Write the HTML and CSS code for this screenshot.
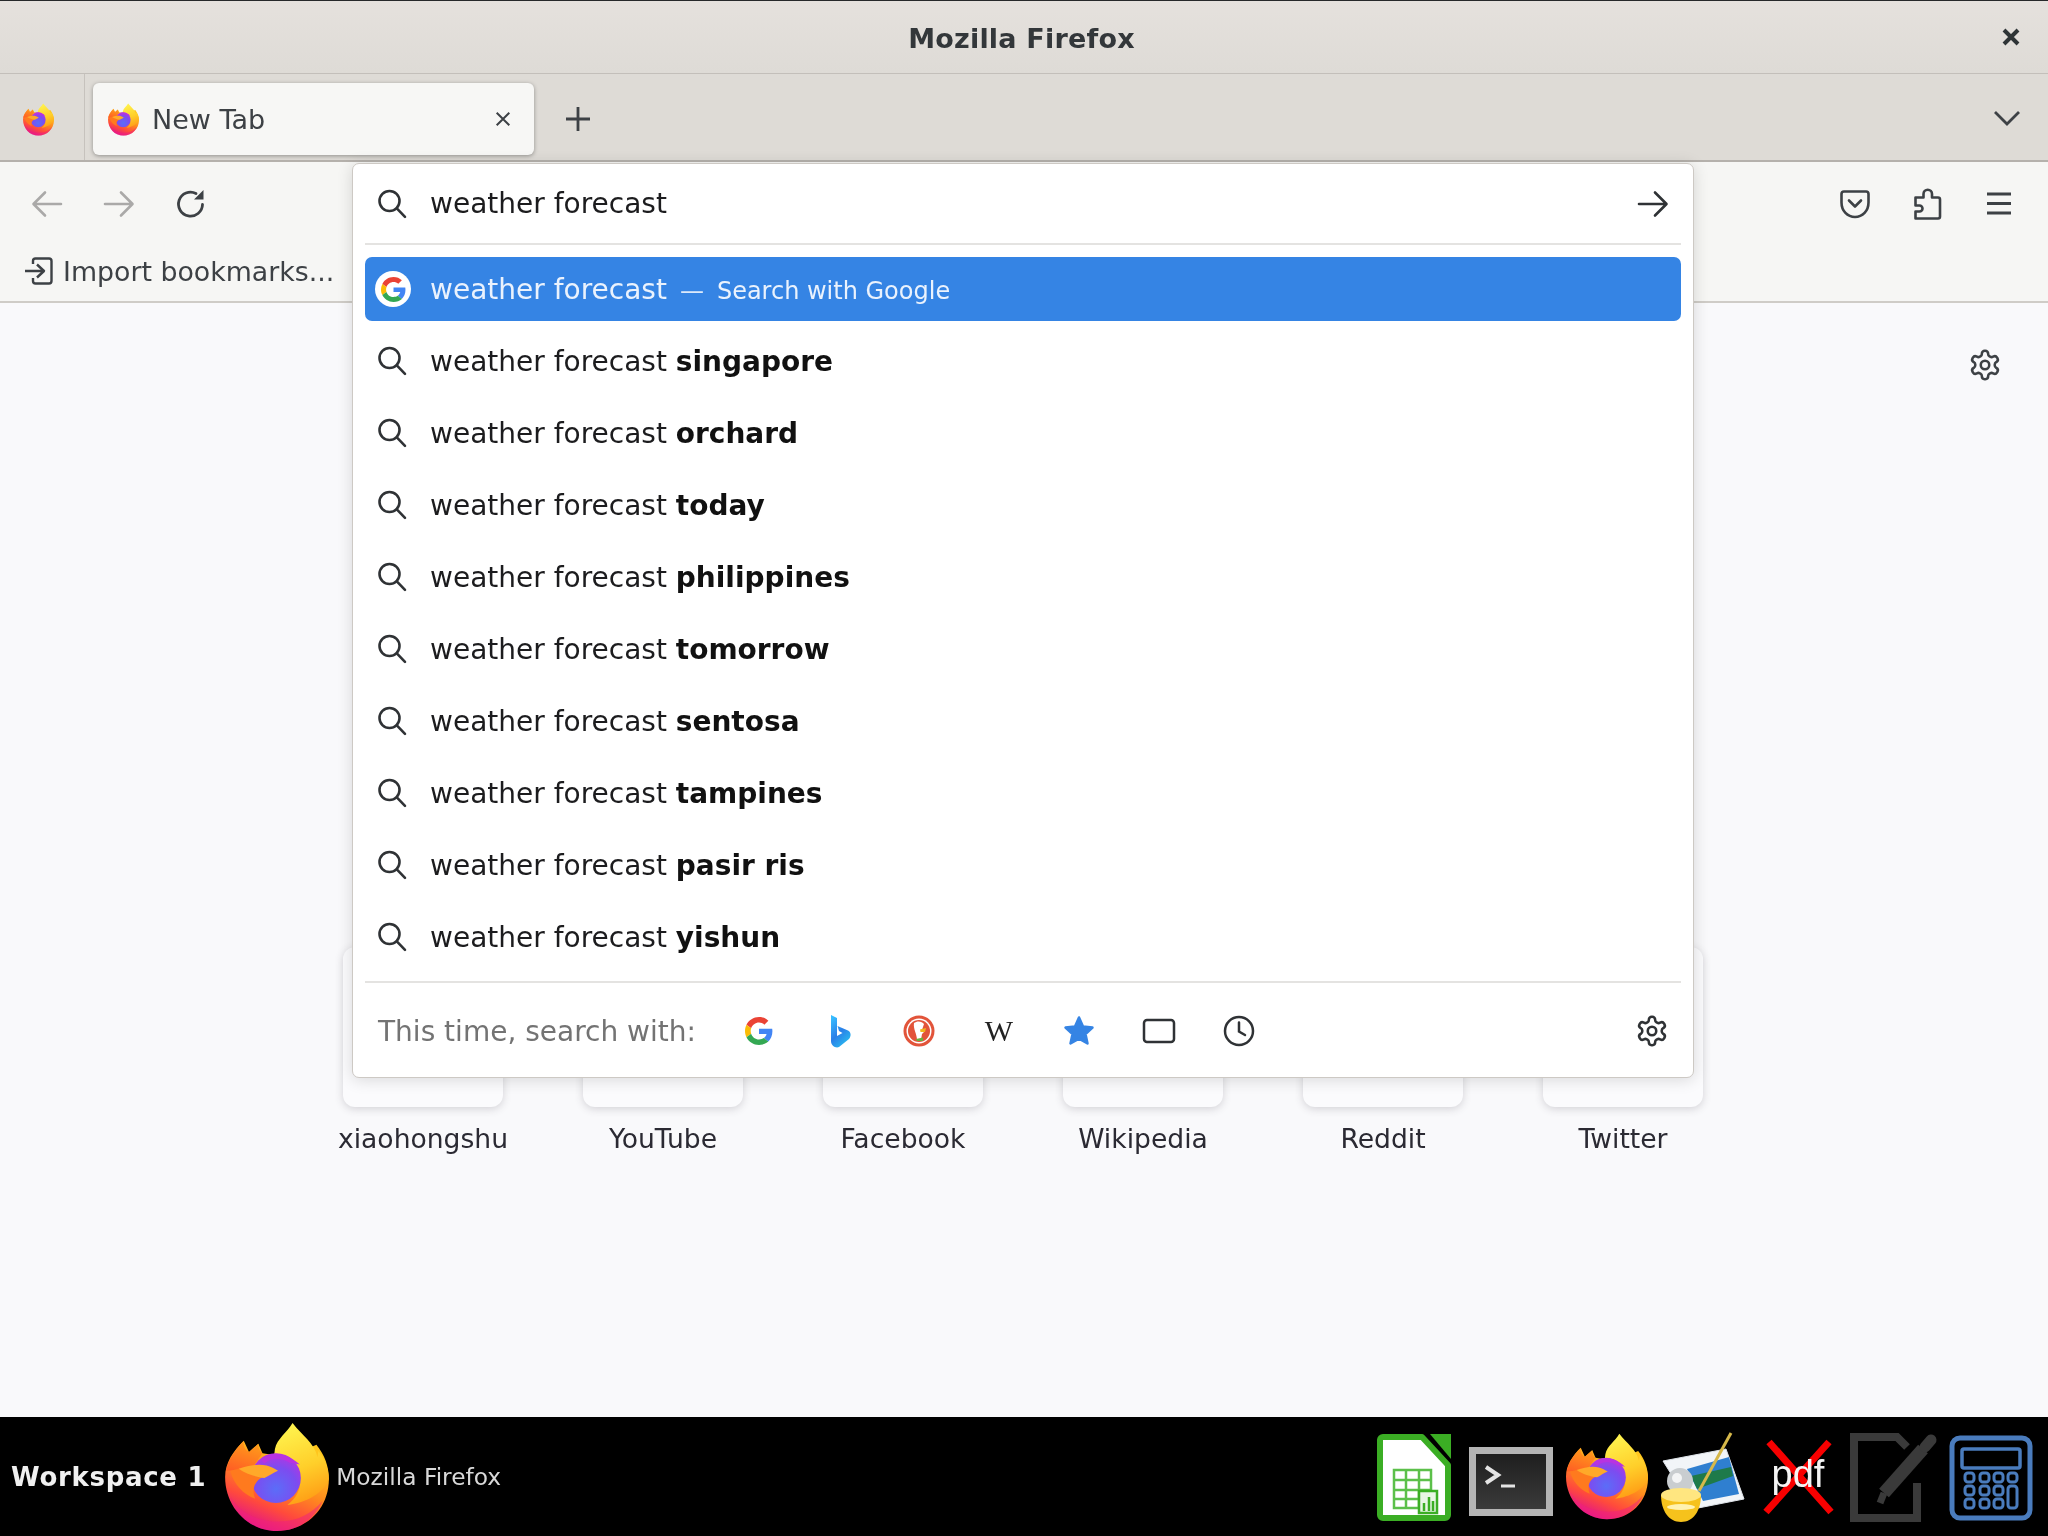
FILE: index.html
```html
<!DOCTYPE html>
<html lang="en">
<head>
<meta charset="utf-8">
<title>Mozilla Firefox</title>
<link rel="stylesheet" href="styles.css">
</head>
<body>
<svg class="defs" width="0" height="0" aria-hidden="true">
  <defs>
    <linearGradient id="ffBody" x1="0.8" y1="0.2" x2="0.4" y2="1">
      <stop offset="0" stop-color="#ffc61e"/><stop offset="0.4" stop-color="#ff8a1e"/><stop offset="0.72" stop-color="#ff4a3c"/><stop offset="1" stop-color="#e31587"/>
    </linearGradient>
    <linearGradient id="ffFlame" x1="0.35" y1="0" x2="0.6" y2="1">
      <stop offset="0" stop-color="#fff44f"/><stop offset="0.55" stop-color="#ffcf2a"/><stop offset="1" stop-color="#ff9a14"/>
    </linearGradient>
    <linearGradient id="ffEar" x1="0.6" y1="0" x2="0.2" y2="1">
      <stop offset="0" stop-color="#ff9c1a"/><stop offset="1" stop-color="#ff5f24"/>
    </linearGradient>
    <radialGradient id="ffGlobe" cx="0.5" cy="0.72" r="0.72">
      <stop offset="0" stop-color="#5b6df8"/><stop offset="0.6" stop-color="#7c4cf0"/><stop offset="1" stop-color="#b833e1"/>
    </radialGradient>
    <symbol id="firefox" viewBox="0 0 100 106">
      <path fill="url(#ffBody)" d="M0 53C0 39 8 28 18 18L23 29L32 21L36 30L60 34L88 22C96 32 100 43 100 55C100 84 78 105 50 105C22 105 0 82 0 53Z"/>
      <path fill="#ef1f80" opacity=".5" d="M5 72C14 88 32 96 52 96C70 96 84 88 94 76C86 94 70 105 50 105C29 105 12 92 5 72Z"/>
      <path fill="url(#ffFlame)" d="M65 1C60 10 50 16 48 26L47 34C60 36 70 42 72 56C73 66 68 74 60 80C78 78 96 68 100 55C100 45 96 36 90 28L89 34C86 20 74 13 65 1Z"/>
      <path fill="url(#ffEar)" d="M18 18C17 23 19 27 23 29L32 21C32 25 33 28 36 30L25 46L1 47C3 36 10 26 18 18Z"/>
      <circle cx="49" cy="54" r="24" fill="url(#ffGlobe)"/>
      <path fill="#b833e1" d="M34 36C42 28 58 28 72 41L62 39C54 34 44 34 38 40Z"/>
      <path fill="#ff7a1e" d="M38 52C29 56 25 64 29 74C18 70 8 60 5 47L13 45Z"/>
      <path fill="#ffa929" d="M13 45C22 42 32 40 40 42C44 43 48 45 51 47C46 49 42 52 38 54C30 53 20 50 13 45Z"/>
    </symbol>
    <symbol id="google" viewBox="0 0 48 48">
      <path fill="#EA4335" d="M24 9.5c3.54 0 6.71 1.22 9.21 3.6l6.85-6.85C35.9 2.38 30.47 0 24 0 14.62 0 6.51 5.38 2.56 13.22l7.98 6.19C12.43 13.72 17.74 9.5 24 9.5z"/>
      <path fill="#4285F4" d="M46.98 24.55c0-1.57-.15-3.09-.38-4.55H24v9.02h12.94c-.58 2.96-2.26 5.48-4.78 7.18l7.73 6c4.51-4.18 7.09-10.36 7.09-17.65z"/>
      <path fill="#FBBC05" d="M10.53 28.59c-.48-1.45-.76-2.99-.76-4.59s.27-3.14.76-4.59l-7.98-6.19C.92 16.46 0 20.12 0 24c0 3.88.92 7.54 2.56 10.78l7.97-6.19z"/>
      <path fill="#34A853" d="M24 48c6.48 0 11.93-2.13 16.02-5.81l-7.73-6c-2.15 1.45-4.92 2.3-8.29 2.3-6.26 0-11.57-4.22-13.47-9.91l-7.98 6.19C6.51 42.62 14.62 48 24 48z"/>
    </symbol>
    <symbol id="search" viewBox="0 0 32 32">
      <circle cx="13.5" cy="13" r="10" fill="none" stroke="currentColor" stroke-width="2.6"/>
      <path d="M20.8 20.3L29 28.8" fill="none" stroke="currentColor" stroke-width="2.6" stroke-linecap="round"/>
    </symbol>
    <symbol id="gear" viewBox="0 0 24 24">
      <path fill="none" stroke="currentColor" stroke-width="1.8" stroke-linejoin="round" d="M12.22 2h-.44a2 2 0 0 0-2 2v.18a2 2 0 0 1-1 1.73l-.43.25a2 2 0 0 1-2 0l-.15-.08a2 2 0 0 0-2.73.73l-.22.38a2 2 0 0 0 .73 2.73l.15.1a2 2 0 0 1 1 1.72v.51a2 2 0 0 1-1 1.74l-.15.09a2 2 0 0 0-.73 2.73l.22.38a2 2 0 0 0 2.73.73l.15-.08a2 2 0 0 1 2 0l.43.25a2 2 0 0 1 1 1.73V20a2 2 0 0 0 2 2h.44a2 2 0 0 0 2-2v-.18a2 2 0 0 1 1-1.73l.43-.25a2 2 0 0 1 2 0l.15.08a2 2 0 0 0 2.73-.73l.22-.39a2 2 0 0 0-.73-2.73l-.15-.08a2 2 0 0 1-1-1.74v-.5a2 2 0 0 1 1-1.74l.15-.09a2 2 0 0 0 .73-2.73l-.22-.38a2 2 0 0 0-2.73-.73l-.15.08a2 2 0 0 1-2 0l-.43-.25a2 2 0 0 1-1-1.73V4a2 2 0 0 0-2-2z"/>
      <circle cx="12" cy="12" r="3" fill="none" stroke="currentColor" stroke-width="1.8"/>
    </symbol>
    <symbol id="arrow" viewBox="0 0 32 32">
      <path d="M2 16H29M18 4.500L29.500 16L18 27.500" fill="none" stroke="currentColor" stroke-width="2.600" stroke-linecap="round" stroke-linejoin="round"/>
    </symbol>
  </defs>
</svg>

<div class="window">
  <header class="titlebar">
    <span class="title">Mozilla Firefox</span>
    <svg class="win-close" viewBox="0 0 20 20"><path d="M3 3L17 17M17 3L3 17"/></svg>
  </header>

  <div class="tabbar">
    <div class="pinned"><svg class="fav"><use href="#firefox"/></svg></div>
    <div class="tab">
      <svg class="fav"><use href="#firefox"/></svg>
      <span class="tab-label">New Tab</span>
      <svg class="tab-close" viewBox="0 0 20 20"><path d="M3 3L17 17M17 3L3 17"/></svg>
    </div>
    <svg class="new-tab" viewBox="0 0 26 26"><path d="M13 1V25M1 13H25"/></svg>
    <svg class="tab-list" viewBox="0 0 28 16"><path d="M2 2L14 14L26 2"/></svg>
  </div>

  <div class="toolbar">
    <div class="nav-row">
      <div class="btn dim"><svg class="i32 flip"><use href="#arrow"/></svg></div>
      <div class="btn dim"><svg class="i32"><use href="#arrow"/></svg></div>
      <div class="btn">
        <svg class="i32" viewBox="0 0 32 32"><path d="M27.500 16.500A12 12 0 1 1 21 5.500" fill="none" stroke="currentColor" stroke-width="2.800" stroke-linecap="round"/><path d="M28.500 2V11.500H19Z" fill="currentColor"/></svg>
      </div>
      <div class="nav-spacer"></div>
      <div class="btn">
        <svg class="i32" viewBox="0 0 32 32"><path d="M5 3.500H27A2.500 2.500 0 0 1 29.500 6V14.500C29.500 23 23.500 29 16 29S2.500 23 2.500 14.500V6A2.500 2.500 0 0 1 5 3.500Z" fill="none" stroke="currentColor" stroke-width="2.600"/><path d="M10 12.500L16 18.500L22 12.500" fill="none" stroke="currentColor" stroke-width="2.600" stroke-linecap="round" stroke-linejoin="round"/></svg>
      </div>
      <div class="btn">
        <svg class="i32 puzzle" viewBox="0 0 32 32"><path d="M3.500 30.500V23.500H7.500A3 3 0 0 0 7.500 17.500H3.500V9.500H11.500V6A4.200 4.200 0 0 1 20 6V9.500H26A2 2 0 0 1 28 11.500V28.500A2 2 0 0 1 26 30.500Z" fill="none" stroke="currentColor" stroke-width="2.600" stroke-linejoin="round"/></svg>
      </div>
      <div class="btn">
        <svg class="i32" viewBox="0 0 32 32"><path d="M4 6H28M4 15.500H28M4 25H28" fill="none" stroke="currentColor" stroke-width="2.800"/></svg>
      </div>
    </div>
    <div class="bookmarks-row">
      <svg class="i30" viewBox="0 0 30 30"><path d="M9 8V5A2.500 2.500 0 0 1 11.500 2.500H25A2.500 2.500 0 0 1 27.500 5V25A2.500 2.500 0 0 1 25 27.500H11.500A2.500 2.500 0 0 1 9 25V22" fill="none" stroke="currentColor" stroke-width="2.400"/><path d="M1 15H19M13 8.500L20 15L13 21.500" fill="none" stroke="currentColor" stroke-width="2.400" stroke-linejoin="round"/></svg>
      <span class="bm-label">Import bookmarks...</span>
    </div>
  </div>

  <main class="newtab">
    <div class="gear-row"><svg class="i34"><use href="#gear"/></svg></div>
    <div class="sites">
      <div class="site"><div class="tile"></div><span class="site-label">xiaohongshu</span></div>
      <div class="site"><div class="tile"></div><span class="site-label">YouTube</span></div>
      <div class="site"><div class="tile"></div><span class="site-label">Facebook</span></div>
      <div class="site"><div class="tile"></div><span class="site-label">Wikipedia</span></div>
      <div class="site"><div class="tile"></div><span class="site-label">Reddit</span></div>
      <div class="site"><div class="tile"></div><span class="site-label">Twitter</span></div>
    </div>
  </main>

  <footer class="taskbar">
    <span class="workspace">Workspace 1</span>
    <svg class="task-logo"><use href="#firefox"/></svg>
    <span class="task-title">Mozilla Firefox</span>
    <div class="launchers">
      <svg class="launcher" viewBox="0 0 96 96">
        <path d="M16 8H55L81 36V86A3 3 0 0 1 78 89H16A3 3 0 0 1 13 86V11A3 3 0 0 1 16 8Z" fill="#fff" stroke="#3bae24" stroke-width="6" stroke-linejoin="round"/>
        <path d="M63 5H84V30Z" fill="#3bae24"/>
        <path d="M27 41H64V79H27ZM27 51H64M27 61H64M27 70H64M39 41V79M52 41V79" fill="none" stroke="#5cc04a" stroke-width="2.500"/>
        <rect x="52" y="62" width="18" height="22" fill="#e8f6e4" stroke="#3bae24" stroke-width="2.500"/>
        <path d="M57 82V74M62 82V68M66 82V72" stroke="#3bae24" stroke-width="2.500"/>
      </svg>
      <svg class="launcher" viewBox="0 0 96 96">
        <defs><linearGradient id="termBg" x1="0" y1="0" x2="0" y2="1"><stop offset="0" stop-color="#1f1f1f"/><stop offset="1" stop-color="#3a3a3a"/></linearGradient></defs>
        <rect x="6" y="18" width="84" height="69" fill="#b4b4b4"/>
        <rect x="13" y="25" width="70" height="55" fill="url(#termBg)"/>
        <path d="M23 38L35 46L23 54" fill="none" stroke="#e4e4e4" stroke-width="4"/>
        <path d="M38 57H52" stroke="#e4e4e4" stroke-width="3"/>
      </svg>
      <svg class="launcher" viewBox="0 0 96 96"><use href="#firefox" x="7" y="4" width="82" height="87"/></svg>
      <svg class="launcher" viewBox="0 0 96 96">
        <path d="M8 32L71 20L89 70L38 80Z" fill="#f2f5f8" stroke="#dfe4ea" stroke-width="1"/>
        <path d="M32 40L74 28L84 65L48 72Z" fill="#2f7fd0"/>
        <path d="M36 47L76 38L78 47L42 60Z" fill="#1e7a4a"/>
        <path d="M76 4L44 62" stroke="#d6b84a" stroke-width="3"/>
        <circle cx="25" cy="52" r="13" fill="#c9cdd0"/>
        <circle cx="22" cy="49" r="5" fill="#f3f4f5"/>
        <path d="M6 66H46C46 82 38 93 26 93S6 82 6 66Z" fill="#f6c21c"/>
        <ellipse cx="26" cy="66" rx="20" ry="7" fill="#ffe680"/>
        <ellipse cx="26" cy="78" rx="14" ry="3" fill="#fff2b0"/>
      </svg>
      <svg class="launcher" viewBox="0 0 96 96">
        <path d="M18 13L80 83M78 13L15 83" stroke="#f80000" stroke-width="7"/>
        <text class="pdf-text" x="47" y="58" text-anchor="middle">pdf</text>
      </svg>
      <svg class="launcher" viewBox="0 0 96 96">
        <path d="M70 54V89H7V8H50L60 18" fill="none" stroke="#3a3a3a" stroke-width="8"/>
        <path d="M37 64L76 20" stroke="#3a3a3a" stroke-width="13"/>
        <path d="M78 18L84 11" stroke="#3a3a3a" stroke-width="11" stroke-linecap="round"/>
        <path d="M37 64L33 74" stroke="#3a3a3a" stroke-width="7"/>
      </svg>
      <svg class="launcher" viewBox="0 0 96 96">
        <rect x="9" y="9" width="78" height="80" rx="8" fill="none" stroke="#4a7cbd" stroke-width="5"/>
        <rect x="19" y="20" width="58" height="19" rx="2" fill="none" stroke="#4a7cbd" stroke-width="3.500"/>
        <g fill="none" stroke="#4a7cbd" stroke-width="3">
          <rect x="22" y="44" width="9" height="9" rx="3"/><rect x="37" y="44" width="9" height="9" rx="3"/><rect x="51" y="44" width="9" height="9" rx="3"/><rect x="65" y="44" width="9" height="9" rx="3"/>
          <rect x="22" y="57" width="9" height="9" rx="3"/><rect x="37" y="57" width="9" height="9" rx="3"/><rect x="51" y="57" width="9" height="9" rx="3"/><rect x="65" y="57" width="9" height="22" rx="3"/>
          <rect x="22" y="70" width="9" height="9" rx="3"/><rect x="37" y="70" width="9" height="9" rx="3"/><rect x="51" y="70" width="9" height="9" rx="3"/>
        </g>
      </svg>
    </div>
  </footer>

  <section class="urlbar">
    <div class="input-row">
      <svg class="i32"><use href="#search"/></svg>
      <span class="query">weather forecast</span>
      <svg class="i32 go"><use href="#arrow"/></svg>
    </div>
    <div class="rule"></div>
    <div class="results">
      <div class="row selected">
        <span class="g-badge"><svg class="g-mark"><use href="#google"/></svg></span>
        <span class="q">weather forecast</span>
        <span class="dash">—</span>
        <span class="action">Search with Google</span>
      </div>
      <div class="row"><svg class="i32"><use href="#search"/></svg><span class="q">weather forecast <b>singapore</b></span></div>
      <div class="row"><svg class="i32"><use href="#search"/></svg><span class="q">weather forecast <b>orchard</b></span></div>
      <div class="row"><svg class="i32"><use href="#search"/></svg><span class="q">weather forecast <b>today</b></span></div>
      <div class="row"><svg class="i32"><use href="#search"/></svg><span class="q">weather forecast <b>philippines</b></span></div>
      <div class="row"><svg class="i32"><use href="#search"/></svg><span class="q">weather forecast <b>tomorrow</b></span></div>
      <div class="row"><svg class="i32"><use href="#search"/></svg><span class="q">weather forecast <b>sentosa</b></span></div>
      <div class="row"><svg class="i32"><use href="#search"/></svg><span class="q">weather forecast <b>tampines</b></span></div>
      <div class="row"><svg class="i32"><use href="#search"/></svg><span class="q">weather forecast <b>pasir ris</b></span></div>
      <div class="row"><svg class="i32"><use href="#search"/></svg><span class="q">weather forecast <b>yishun</b></span></div>
    </div>
    <div class="rule"></div>
    <div class="oneoff">
      <span class="oneoff-label">This time, search with:</span>
      <div class="engines">
        <div class="engine"><svg class="g-plain" viewBox="0 0 48 48"><use href="#google" width="48" height="48"/></svg></div>
        <div class="engine">
          <svg class="i34" viewBox="0 0 34 34">
            <defs><linearGradient id="bing" x1="0.2" y1="0" x2="0.8" y2="1"><stop offset="0" stop-color="#37bdff"/><stop offset="0.5" stop-color="#2a7fe8"/><stop offset="1" stop-color="#29c3f0"/></linearGradient></defs>
            <path fill="url(#bing)" d="M9 1L15 4V22L20.500 19L17 17L15.500 12L26 16.500C29 18 29.500 22 27 25L17 33C14 34.500 9 32 9 27Z"/>
          </svg>
        </div>
        <div class="engine">
          <svg class="i34" viewBox="0 0 34 34">
            <circle cx="17" cy="17" r="15.500" fill="#e2543a"/><circle cx="17" cy="17" r="12.500" fill="#fff"/><circle cx="17" cy="17" r="11" fill="#e2543a"/>
            <path d="M12 9C15 6.500 20 7 22 10L20 16L23 17L20 20L19 26H15C15 20 11 15 12 9Z" fill="#fff"/>
            <path d="M18 15.500L24 14L23 18L18.500 18Z" fill="#f2b61c"/>
            <path d="M14 25L21 23.500V27H15Z" fill="#6ab23c"/>
          </svg>
        </div>
        <div class="engine"><span class="wiki">W</span></div>
        <div class="engine">
          <svg class="i34" viewBox="0 0 34 34"><path d="M17 3.500L21 12.500L30.500 13.500L23.500 20L25.500 29.500L17 24.700L8.500 29.500L10.500 20L3.500 13.500L13 12.500Z" fill="#3584e4" stroke="#3584e4" stroke-width="2.500" stroke-linejoin="round"/></svg>
        </div>
        <div class="engine">
          <svg class="i34" viewBox="0 0 34 34"><rect x="2" y="6" width="30" height="22" rx="3" fill="none" stroke="currentColor" stroke-width="2.500"/></svg>
        </div>
        <div class="engine">
          <svg class="i34" viewBox="0 0 34 34"><circle cx="17" cy="17" r="14" fill="none" stroke="currentColor" stroke-width="2.500"/><path d="M17 8.500V17.500L23 21" fill="none" stroke="currentColor" stroke-width="2.500" stroke-linecap="round"/></svg>
        </div>
      </div>
      <svg class="i34 oneoff-gear"><use href="#gear"/></svg>
    </div>
  </section>
</div>
</body>
</html>
```

FILE: styles.css
```css
* { box-sizing: border-box; }
html, body { margin: 0; padding: 0; }
body { width: 2048px; height: 1536px; overflow: hidden; font-family: "DejaVu Sans", sans-serif; color: #2e3436; }
.defs { position: absolute; }

.window { position: relative; display: flex; flex-direction: column; width: 2048px; height: 1536px; background: #f9f9fb; filter: blur(0.5px); }

.titlebar { display: flex; align-items: center; justify-content: center; height: 74px; flex: none; position: relative; padding: 2px 5px 0 0; background: linear-gradient(#e5e1dd, #dedbd6); border-top: 1px solid #26282a; border-bottom: 1px solid #c3bfba; }
.title { font-size: 27px; font-weight: 700; letter-spacing: .2px; color: #33373a; }
.win-close { position: absolute; right: 27px; top: 26px; width: 20px; height: 20px; fill: none; stroke: #2e3436; stroke-width: 4; }

.tabbar { display: flex; align-items: center; height: 88px; flex: none; background: #dedbd6; border-bottom: 2px solid #b5b1ac; }
.pinned { display: flex; align-items: center; width: 85px; height: 100%; padding: 4px 0 0 23px; border-right: 1px solid #c6c2bd; }
.fav { width: 31px; height: 33px; flex: none; }
.tab { display: flex; align-items: center; width: 441px; height: 72px; margin: 4px 0 0 8px; padding-left: 15px; background: #f7f7f5; border-radius: 6px; box-shadow: 0 1px 4px rgba(0, 0, 0, .35); }
.tab-label { margin-left: 13px; font-size: 27px; color: #3d4145; }
.tab-close { margin-left: auto; margin-right: 22px; width: 18px; height: 18px; fill: none; stroke: #3d4145; stroke-width: 2.200; }
.new-tab { margin: 4px 0 0 31px; width: 26px; height: 26px; fill: none; stroke: #3d4145; stroke-width: 2.800; }
.tab-list { margin: 2px 27px 0 auto; width: 28px; height: 16px; fill: none; stroke: #3d4145; stroke-width: 2.800; }

.toolbar { flex: none; height: 141px; background: #f6f6f4; border-bottom: 2px solid #cfccc7; }
.nav-row { display: flex; align-items: center; height: 79px; padding: 4px 13px 0 11px; color: #3d4145; }
.btn { display: flex; align-items: center; justify-content: center; width: 72px; height: 60px; }
.dim { color: #aaa9a8; }
.flip { transform: scaleX(-1); }
.puzzle { margin-left: 2px; }
.nav-spacer { flex: 1; }
.i32 { width: 32px; height: 32px; flex: none; color: #2f3235; }
.btn .i32 { color: inherit; }
.i30 { width: 30px; height: 30px; flex: none; }
.i34 { width: 34px; height: 34px; flex: none; color: #2f3235; }
.bookmarks-row { display: flex; align-items: center; height: 60px; padding-left: 24px; color: #3d4145; }
.bm-label { margin-left: 9px; font-size: 26.800px; }

.newtab { flex: 1; min-height: 0; }
.gear-row { display: flex; justify-content: flex-end; padding: 45px 46px 0 0; }
.gear-row .i34 { color: #3d4145; }
.sites { display: flex; justify-content: center; gap: 80px; margin-top: 565px; padding-right: 2px; }
.site { display: flex; flex-direction: column; align-items: center; width: 160px; }
.tile { width: 160px; height: 160px; background: #fbfbfd; border-radius: 12px; box-shadow: 0 2px 8px rgba(58, 57, 68, .2); }
.site-label { margin-top: 14px; font-size: 26.600px; line-height: 36px; white-space: nowrap; color: #2b2a33; }

.taskbar { display: flex; align-items: center; flex: none; height: 119px; background: #000; }
.workspace { margin-left: 11px; font-size: 26px; font-weight: 700; color: #f0f0f0; letter-spacing: .7px; }
.task-logo { margin: 0 0 0 19px; width: 104px; height: 110px; flex: none; }
.task-title { margin-left: 7px; font-size: 23.300px; color: #d8d8d8; }
.launchers { display: flex; margin-left: auto; margin-right: 9px; }
.launcher { width: 96px; height: 96px; flex: none; }
.pdf-text { font-family: "Liberation Sans", sans-serif; font-size: 38px; fill: #f4f4f4; }

.urlbar { position: absolute; left: 352px; top: 163px; width: 1342px; height: 915px; display: flex; flex-direction: column; padding: 0 12px; background: #fff; border: 1px solid #cdc9c4; border-radius: 7px; box-shadow: 0 2px 16px rgba(0, 0, 0, .14); }
.input-row { display: flex; align-items: center; height: 79px; flex: none; padding: 0 0 0 11px; }
.query { margin-left: 22px; font-size: 28px; color: #1c1c1e; }
.go { margin-left: auto; margin-right: 12px; }
.rule { flex: none; height: 2px; background: #e4e3e1; }
.results { display: flex; flex-direction: column; gap: 8px; flex: none; padding: 12px 0; }
.row { display: flex; align-items: center; height: 64px; padding-left: 11px; border-radius: 7px; color: #1c1c1e; }
.row .q { margin-left: 22px; font-size: 28px; white-space: pre; }
.row b { font-weight: 700; color: #111; }
.selected { background: #3584e4; color: #fff; padding-left: 10px; }
.selected .q { margin-left: 19px; color: #eaf2fd; }
.g-badge { display: flex; align-items: center; justify-content: center; width: 36px; height: 36px; border-radius: 50%; background: #fff; flex: none; }
.g-mark { width: 25px; height: 25px; }
.dash { margin-left: 13px; padding-top: 3px; font-size: 24px; color: #dce9fa; }
.action { margin-left: 13px; padding-top: 3px; font-size: 24px; color: #eaf2fd; }

.oneoff { display: flex; align-items: center; flex: 1; padding: 2px 12px 0 13px; }
.oneoff-label { font-size: 28px; color: #737373; white-space: nowrap; }
.engines { display: flex; margin-left: 23px; color: #2f3235; }
.engine { display: flex; align-items: center; justify-content: center; width: 80px; height: 60px; }
.g-plain { width: 28px; height: 28px; }
.wiki { font-family: "Liberation Serif", serif; font-size: 30px; color: #222; }
.oneoff-gear { margin-left: auto; }
```
